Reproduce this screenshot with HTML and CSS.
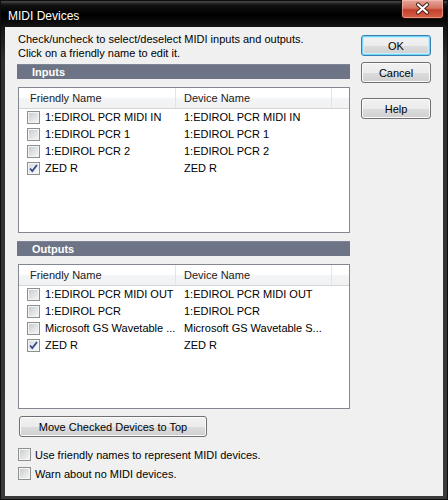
FILE: index.html
```html
<!doctype html>
<html lang="en">
<head>
	<meta charset="UTF-8" />
	<title>MIDI Devices</title>
<link rel="stylesheet" href="styles.css">
</head>
<body>
	<div class="window">
		<div class="titlebar">
			<span class="title">MIDI Devices</span>
			<div class="close">
				<svg width="43" height="19" viewBox="0 0 43 19">
					<path d="M17 5.5 L26 13.5 M26 5.5 L17 13.5" stroke="#4a2018" stroke-width="4.2" stroke-linecap="round" fill="none"/>
					<path d="M17 5.5 L26 13.5 M26 5.5 L17 13.5" stroke="#fff" stroke-width="2.2" stroke-linecap="round" fill="none"/>
				</svg>
			</div>
		</div>
		<div class="client">
			<div class="main">
				<p class="intro">Check/uncheck to select/deselect MIDI inputs and outputs.<br>Click on a friendly name to edit it.</p>

				<div class="group-bar">Inputs</div>
				<div class="listview">
					<div class="lv-head">
						<span class="col1">Friendly Name</span>
						<span class="col2">Device Name</span>
						<span class="col-rest"></span>
					</div>
					<ul class="lv-rows">
						<li><span class="col1"><i class="check"></i>1:EDIROL PCR MIDI IN</span><span class="col2">1:EDIROL PCR MIDI IN</span></li>
						<li><span class="col1"><i class="check"></i>1:EDIROL PCR 1</span><span class="col2">1:EDIROL PCR 1</span></li>
						<li><span class="col1"><i class="check"></i>1:EDIROL PCR 2</span><span class="col2">1:EDIROL PCR 2</span></li>
						<li><span class="col1"><i class="check on"><svg width="11" height="11" viewBox="0 0 11 11"><path d="M2 5.5 L4.3 8 L9 2" stroke="#34488a" stroke-width="1.8" fill="none"/></svg></i>ZED R</span><span class="col2">ZED R</span></li>
					</ul>
				</div>

				<div class="group-bar outputs">Outputs</div>
				<div class="listview short">
					<div class="lv-head">
						<span class="col1">Friendly Name</span>
						<span class="col2">Device Name</span>
						<span class="col-rest"></span>
					</div>
					<ul class="lv-rows">
						<li><span class="col1"><i class="check"></i>1:EDIROL PCR MIDI OUT</span><span class="col2">1:EDIROL PCR MIDI OUT</span></li>
						<li><span class="col1"><i class="check"></i>1:EDIROL PCR</span><span class="col2">1:EDIROL PCR</span></li>
						<li><span class="col1"><i class="check"></i>Microsoft GS Wavetable ...</span><span class="col2">Microsoft GS Wavetable S...</span></li>
						<li><span class="col1"><i class="check on"><svg width="11" height="11" viewBox="0 0 11 11"><path d="M2 5.5 L4.3 8 L9 2" stroke="#34488a" stroke-width="1.8" fill="none"/></svg></i>ZED R</span><span class="col2">ZED R</span></li>
					</ul>
				</div>

				<button class="btn move">Move Checked Devices to Top</button>

				<label class="option"><i class="check"></i>Use friendly names to represent MIDI devices.</label>
				<label class="option"><i class="check"></i>Warn about no MIDI devices.</label>
			</div>
			<div class="side">
				<button class="btn default">OK</button>
				<button class="btn">Cancel</button>
				<button class="btn help">Help</button>
			</div>
		</div>
	</div>
</body>
</html>
```

FILE: styles.css
```css
body,ul,li,p{
	margin: 0;
	padding: 0;
}
body{
	font-family: "Liberation Sans", Arial, sans-serif;
	font-size: 11px;
	color: #000;
	background: #fff;
}
.window{
	width: 448px;
	height: 500px;
	box-sizing: border-box;
	display: flex;
	flex-direction: column;
	border: 1px solid #0e0e0e;
	background: linear-gradient(to bottom, #4a4a4a 0, #111 4px, #000 14px, #141414 26px, #2f2f2f 60px, #3a3a3a 100%);
}
.titlebar{
	height: 26px;
	display: flex;
	justify-content: space-between;
	align-items: flex-start;
}
.title{
	color: #fff;
	font-size: 12px;
	line-height: 14px;
	margin: 8px 0 0 7px;
}
.close{
	width: 43px;
	height: 19px;
	margin: -1px 3px 0 0;
	box-sizing: border-box;
	border: 1px solid #2a0e0a;
	border-top: none;
	border-radius: 0 0 4px 4px;
	background: linear-gradient(to bottom, #e6a79b 0, #d47462 45%, #c2402c 55%, #d8624a 100%);
	box-shadow: inset 0 0 0 1px rgba(255,210,200,.45);
}
.close svg{
	display: block;
	margin: -1px 0 0 -1px;
}
.client{
	flex: 1;
	margin: 0 4px 3px 4px;
	background: #f0f0f0;
	display: flex;
	padding: 5px 12px 0 12px;
	gap: 11px;
}
.main{
	width: 333px;
	display: flex;
	flex-direction: column;
}
.intro{
	line-height: 14px;
	padding-left: 1px;
}
.group-bar{
	margin-top: 4px;
	height: 14px;
	line-height: 14px;
	background: #6d7485;
	color: #fff;
	font-weight: bold;
	padding-left: 15px;
	border-top: 1px solid #7d8494;
}
.group-bar.outputs{
	margin-top: 8px;
}
.listview{
	margin: 8px 0 0 1px;
	height: 146px;
	box-sizing: border-box;
	border: 1px solid #828790;
	background: #fff;
}
.listview.short{
	height: 145px;
}
.lv-head{
	display: flex;
	height: 21px;
	box-sizing: border-box;
	line-height: 20px;
	background: linear-gradient(to bottom, #fff 0, #fff 45%, #f3f4f6 55%, #f1f2f4 100%);
	border-bottom: 1px solid #d5d5d5;
	color: #222;
}
.lv-head .col1{
	padding-left: 11px;
	border-right: 1px solid #e3e4e6;
}
.lv-head .col2{
	border-right: 1px solid #e3e4e6;
}
.col1{
	width: 157px;
	box-sizing: border-box;
	flex: none;
	display: flex;
	align-items: center;
	white-space: nowrap;
	overflow: hidden;
}
.col2{
	width: 156px;
	box-sizing: border-box;
	flex: none;
	padding-left: 8px;
	white-space: nowrap;
	overflow: hidden;
}
.col-rest{
	flex: 1;
}
.lv-rows{
	list-style: none;
}
.lv-rows li{
	display: flex;
	height: 17px;
	line-height: 17px;
}
.lv-rows .col1{
	padding-left: 8px;
}
.check{
	display: block;
	flex: none;
	width: 13px;
	height: 13px;
	box-sizing: border-box;
	border: 1px solid #8e8f8f;
	background: linear-gradient(135deg, #c4c6c9 0, #e0e1e3 50%, #f7f7f7 100%);
	box-shadow: inset 0 0 0 1px #f4f4f4;
	margin-right: 5px;
}
.check.on{
	background: linear-gradient(135deg, #d6d8dc 0, #eeeff1 60%, #fafafa 100%);
}
.check svg{
	display: block;
}
.btn{
	font: inherit;
	color: #000;
	height: 21px;
	width: 70px;
	padding: 0;
	border: 1px solid #707070;
	border-radius: 3px;
	background: linear-gradient(to bottom, #f2f2f2 0, #ebebeb 50%, #dddddd 51%, #cfcfcf 100%);
	box-shadow: inset 0 0 0 1px #fbfbfb;
}
.btn.default{
	border-color: #3c7fb1;
	box-shadow: inset 0 0 0 1px #6ed6f8, inset 0 0 0 2px #c6eefc;
	background: linear-gradient(to bottom, #f3f3f3 0, #ececec 50%, #dedede 51%, #d0d0d0 100%);
}
.btn.move{
	width: 188px;
	margin: 7px 0 0 2px;
}
.side{
	display: flex;
	flex-direction: column;
	gap: 6px;
	padding-top: 3px;
}
.btn.help{
	margin-top: 9px;
}
.option{
	display: flex;
	align-items: center;
	height: 17px;
	margin-top: 2px;
	padding-left: 1px;
}
.btn.move + .option{
	margin-top: 9px;
}
.option .check{
	margin-right: 4px;
}
```
